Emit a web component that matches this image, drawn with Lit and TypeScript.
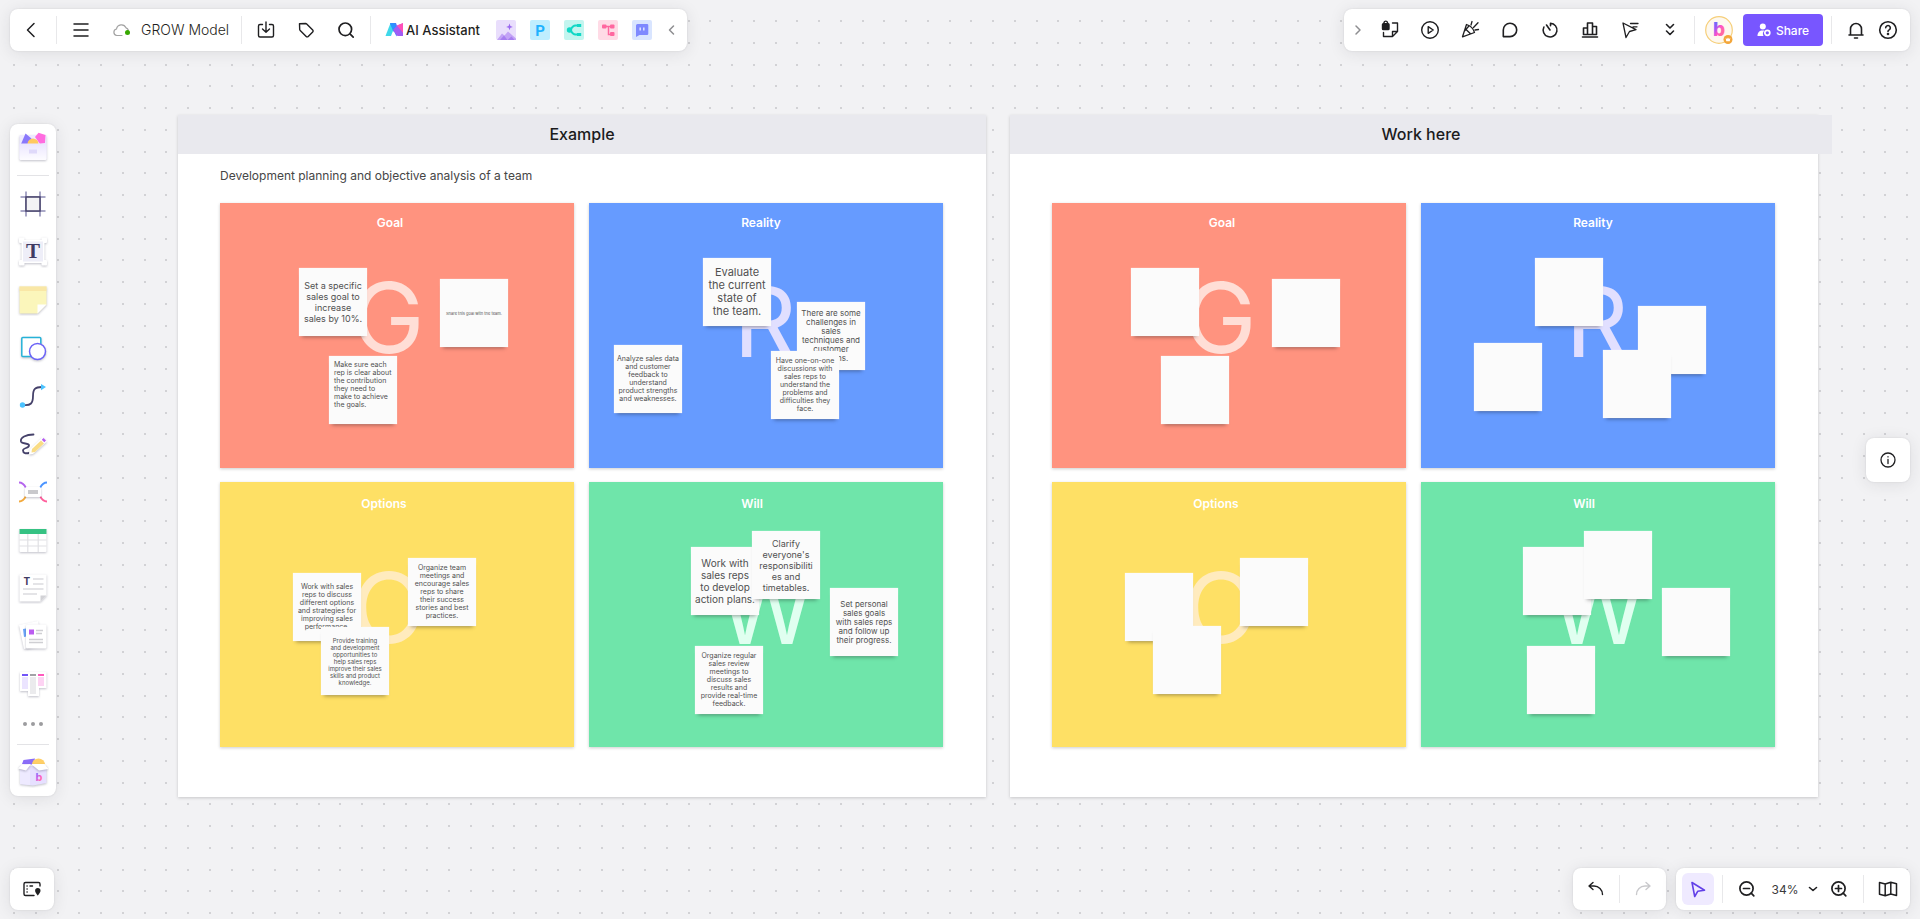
import { LitElement, html, svg, css } from "lit";
import { customElement, property, state } from "lit/decorators.js";
import { styleMap } from "lit/directives/style-map.js";

type Note = { x: number; y: number; size?: number; text?: string; left?: boolean };
type Quadrant = {
  title: string;
  letter: string;
  tone: string;
  titleX: number;
  titleY: number;
  letterX: number;
  letterY: number;
  notes: Note[];
};

const ZOOM = 0.34;
const GRID = 64 * ZOOM;

/* Line height that goes with each note text size. */
const LINE: Record<number, number> = { 4: 5, 6: 7, 7: 8, 8: 9, 9: 11, 10: 12, 11: 13 };

const exampleQuadrants: Quadrant[] = [
  {
    title: "Goal", letter: "G", tone: "goal", titleX: 170, titleY: 12, letterX: 168, letterY: 56,
    notes: [
      { x: 79, y: 65, size: 9, text: "Set a specific\nsales goal to\nincrease\nsales by 10%." },
      { x: 220, y: 76, size: 4, text: "Share this goal with the team." },
      { x: 109, y: 153, size: 7, left: true, text: "Make sure each\nrep is clear about\nthe contribution\nthey need to\nmake to achieve\nthe goals." },
    ],
  },
  {
    title: "Reality", letter: "R", tone: "reality", titleX: 172, titleY: 12, letterX: 176, letterY: 60,
    notes: [
      { x: 114, y: 55, size: 11, text: "Evaluate\nthe current\nstate of\nthe team." },
      { x: 208, y: 99, size: 8, text: "There are some\nchallenges in\nsales\ntechniques and\ncustomer\nrelations." },
      { x: 25, y: 142, size: 7, text: "Analyze sales data\nand customer\nfeedback to\nunderstand\nproduct strengths\nand weaknesses." },
      { x: 182, y: 148, size: 7, text: "Have one-on-one\ndiscussions with\nsales reps to\nunderstand the\nproblems and\ndifficulties they\nface." },
    ],
  },
  {
    title: "Options", letter: "O", tone: "options", titleX: 164, titleY: 14, letterX: 169, letterY: 67,
    notes: [
      { x: 73, y: 91, size: 7, text: "Work with sales\nreps to discuss\ndifferent options\nand strategies for\nimproving sales\nperformance." },
      { x: 188, y: 76, size: 7, text: "Organize team\nmeetings and\nencourage sales\nreps to share\ntheir success\nstories and best\npractices." },
      { x: 101, y: 145, size: 6, text: "Provide training\nand development\nopportunities to\nhelp sales reps\nimprove their sales\nskills and product\nknowledge." },
    ],
  },
  {
    title: "Will", letter: "W", tone: "will", titleX: 163, titleY: 14, letterX: 177, letterY: 68,
    notes: [
      { x: 102, y: 65, size: 10, text: "Work with\nsales reps\nto develop\naction plans." },
      { x: 163, y: 49, size: 9, text: "Clarify\neveryone's\nresponsibiliti\nes and\ntimetables." },
      { x: 241, y: 106, size: 8, text: "Set personal\nsales goals\nwith sales reps\nand follow up\ntheir progress." },
      { x: 106, y: 164, size: 7, text: "Organize regular\nsales review\nmeetings to\ndiscuss sales\nresults and\nprovide real-time\nfeedback." },
    ],
  },
];

const blankNotes: Note[][] = [
  [{ x: 79, y: 65 }, { x: 220, y: 76 }, { x: 109, y: 153 }],
  [{ x: 114, y: 55 }, { x: 217, y: 103 }, { x: 53, y: 140 }, { x: 182, y: 147 }],
  [{ x: 73, y: 91 }, { x: 188, y: 76 }, { x: 101, y: 144 }],
  [{ x: 102, y: 65 }, { x: 163, y: 49 }, { x: 241, y: 106 }, { x: 106, y: 164 }],
];
const workQuadrants = exampleQuadrants.map((q, i) => ({ ...q, notes: blankNotes[i] }));

/* ---------- icons ---------- */
const line = (body: unknown, size = 24, width = "1.5") =>
  html`<svg width=${size} height=${size} viewBox="0 0 ${size} ${size}" fill="none" stroke="currentColor"
    stroke-width=${width} stroke-linecap="round" stroke-linejoin="round" aria-hidden="true">${body}</svg>`;
const art = (body: unknown, size = 32) =>
  html`<svg width=${size} height=${size} viewBox="0 0 ${size} ${size}" fill="none" aria-hidden="true">${body}</svg>`;

const I = {
  back: line(svg`<path d="M14 5.500 7.500 12l6.500 6.500"/>`),
  menu: line(svg`<path d="M5 6h14M5 12h14M5 18h14"/>`),
  cloud: html`<svg width="17" height="16" viewBox="0 0 17 16" fill="none" aria-hidden="true">
    <path d="M9 13.500H3.800a3.300 3.300 0 0 1-.3-6.500A5 5 0 0 1 13 5.800a3.300 3.300 0 0 1 2.300 2.400" stroke="#a3a3a3" stroke-width="1.200" stroke-linecap="round"/>
    <circle cx="14.500" cy="10.500" r="2.500" fill="#37a800"/></svg>`,
  import: line(svg`<path d="M8.500 6.500H6a1.500 1.500 0 0 0-1.500 1.500v9.500A1.500 1.500 0 0 0 6 19h12a1.500 1.500 0 0 0 1.500-1.500V8A1.500 1.500 0 0 0 18 6.500h-2.500M12 4v10M8.500 11l3.500 3.300 3.500-3.300"/>`, 24, "1.4"),
  tag: line(svg`<path d="M5.500 5.700 11.700 5.500a1.500 1.500 0 0 1 1 .4l6 6a1.400 1.400 0 0 1 0 2l-4.500 4.600a1.400 1.400 0 0 1-2 0l-6-6a1.500 1.500 0 0 1-.5-1z"/>`, 24, "1.4"),
  search: line(svg`<circle cx="11.300" cy="11.300" r="6.300"/><path d="m16.200 16.200 3 3"/>`, 24, "1.7"),
  logo: html`<svg width="18" height="14" viewBox="0 0 18 14" aria-hidden="true">
    <path d="M5.500 0H11L6 13H0.500z" fill="#3fd8ea"/><path d="M5 0h6l2.500 7-2 6.500z" fill="#4a7bf7"/>
    <path d="M5 .5 8.500 9 11 4 9.500 0z" fill="#2a92ff"/>
    <path d="M12 2.500 18 .2V13h-5.500L8 7z" fill="#a05cf5"/><path d="M12 2.500 18 0v10z" fill="#ff4fb8"/></svg>`,
  image: art(svg`<rect width="20" height="20" rx="2" fill="#e9defc"/><path d="m1 20 5-6.500 2.500 2 3.500-4 8 7V20z" fill="#c3a3f6"/><path d="m4 20 4-4.500L11.500 20l4-3.500 3 3.500z" fill="#a77ef0"/><path d="M13.500 3.500 14.400 6l2.500.9-2.500.9-.9 2.500-.9-2.500L10.100 6.900l2.500-.9z" fill="#9a68f0"/>`, 20),
  ppt: art(svg`<rect width="20" height="20" rx="2" fill="#bfeeff"/><text x="10" y="15.500" text-anchor="middle" font-family="Roboto, sans-serif" font-weight="700" font-size="15" fill="#1eb2ff">P</text>`, 20),
  mind: art(svg`<rect width="20" height="20" rx="2" fill="#c3f5ef"/><circle cx="5.500" cy="10" r="2.700" fill="#12d8c6"/><path d="M16 5.500h-4.500C9 5.500 7.500 8 6.500 10c1 2 2.500 4.500 5 4.500H16" stroke="#12d8c6" stroke-width="2"/><path d="M13 4h4.200v3H13zM13 13h4.200v3H13z" fill="#12d8c6"/>`, 20),
  flow: art(svg`<rect width="20" height="20" rx="2" fill="#ffdbe6"/><path d="M6 6.500h8M10.500 6.500v8H14" stroke="#ff679f" stroke-width="1.500"/><rect x="4" y="4.500" width="4.500" height="4" rx="1" fill="#ff679f"/><rect x="12" y="4.500" width="4.500" height="4" rx="1" fill="#ff679f"/><rect x="12" y="12" width="4.500" height="4" rx="1" fill="#ff679f"/>`, 20),
  chatAi: art(svg`<rect width="20" height="20" rx="2" fill="#d9e5ff"/><path d="M5.500 4H15a1.300 1.300 0 0 1 1.300 1.300v8.400A1.300 1.300 0 0 1 15 15H7.500L4 17V5.500A1.500 1.500 0 0 1 5.500 4z" fill="#7e89ff"/><path d="M8.200 7.500v3M11.800 7.500v3" stroke="#dfe6ff" stroke-width="1.500"/>`, 20),
  left: line(svg`<path d="M9.500 4 5.500 8l4 4"/>`, 16),
  right: line(svg`<path d="M6 4l4 4-4 4"/>`, 16),
  lock: line(svg`<rect x="4.500" y="5.800" width="6.500" height="5.700" rx=".8" fill="currentColor"/><path d="M6 5.800V4.500a1.800 1.800 0 0 1 3.500 0v1.300M5.500 14.500v4h6M14.500 5H19.500v8.500l-5 5h-3M19.500 13.500h-5v5"/>`, 24, "1.4"),
  play: line(svg`<circle cx="12" cy="12" r="8.300"/><path d="M10.200 8.700v6.600l5-3.300z"/>`, 24, "1.4"),
  party: line(svg`<path d="M8.500 6.500 4.500 18.800l12-4.300A12 12 0 0 0 8.500 6.500zM7.500 11l5 4.800M10.500 8.500 6.500 13M13 7l1-3.500M15.500 9.500 20 4.800M17 12l3.500-.5"/>`, 24, "1.3"),
  bubble: line(svg`<path d="M12 5.200a6.700 6.700 0 0 1 0 13.400H5.300V12A6.700 6.700 0 0 1 12 5.200z"/>`, 24, "1.6"),
  timer: line(svg`<path d="M12.500 5.200v2.500M12.500 5.200a6.900 6.900 0 1 1-6.600 3.800M8.500 7l3.500 5"/>`, 24, "1.6"),
  chart: line(svg`<path d="M5.500 10h4v6.500h-4zM9.500 5h5v11.500h-5zM14.500 8.500h4v8h-4zM4.500 19h15"/>`, 24, "1.6"),
  laser: line(svg`<path d="m5 5 3 14.500 3.500-6 6.500-1.800zM12.500 5.500H20M15 8.800H19"/>`, 24, "1.3"),
  more: line(svg`<path d="m8.500 6.500 3.500 3.500 3.500-3.500M8.500 13l3.500 3.500 3.500-3.500"/>`, 24, "1.6"),
  bell: line(svg`<path d="M5 17h14M6.500 17v-6a5.500 5.500 0 0 1 11 0v6M10.500 20h3"/>`, 24, "1.6"),
  help: line(svg`<circle cx="12" cy="12" r="8.300"/><path d="M9.700 9.800a2.300 2.300 0 1 1 3.400 2.100c-.8.400-1.100.9-1.100 1.600"/><circle cx="12" cy="16" r=".5" fill="currentColor"/>`, 24, "1.6"),
  share: html`<svg width="14" height="14" viewBox="0 0 14 14" aria-hidden="true"><circle cx="5.800" cy="3.500" r="3" fill="#fff"/><path d="M.5 13c0-3.500 2-5.500 5-5.500h2A4.500 4.500 0 0 0 6.500 13z" fill="#fff"/><circle cx="10.300" cy="9.800" r="2.500" fill="none" stroke="#fff" stroke-width="1.700"/></svg>`,
  undo: line(svg`<path d="M9 5.500 5 9l4 3.500M5.500 9H10a8.500 8.500 0 0 1 8.500 8.500"/>`, 24, "1.4"),
  redo: line(svg`<path d="m15 5.500 4 3.500-4 3.500M18.500 9H14a8.500 8.500 0 0 0-8.500 8.500"/>`, 24, "1.4"),
  pointer: line(svg`<path d="m6 5.500 2.700 14 3-5.200 6.800-1z"/>`, 24, "1.6"),
  zoomOut: line(svg`<circle cx="11.500" cy="11.500" r="6.600"/><path d="m16.200 16.200 2.600 2.600M8.500 11.500h6"/>`, 24, "1.7"),
  zoomIn: line(svg`<circle cx="11.500" cy="11.500" r="6.600"/><path d="m16.200 16.200 2.600 2.600M8.500 11.500h6M11.500 8.500v6"/>`, 24, "1.7"),
  map: line(svg`<path d="m3.500 5.500 5.700 1.500 5.600-1.800 5.700 1.600V18.500l-5.700-1.500-5.600 1.800-5.700-1.500zM9.200 7v11.800M14.800 5.200v11.800"/>`, 24, "1.5"),
  down: line(svg`<path d="m1.500 3.500 3.500 3 3.500-3"/>`, 10, "1.6"),
  info: line(svg`<circle cx="8" cy="8" r="7"/><path d="M8 7.500v4M8 4.700v.2"/>`, 16, "1.3"),
  minimap: line(svg`<path d="M20 9V7a1.500 1.500 0 0 0-1.500-1.500h-13A1.500 1.500 0 0 0 4 7v10a1.500 1.500 0 0 0 1.500 1.500H14M7 9h.2M7 12h.2M7 15h.2M10 9h2.500"/><path d="M17.800 11a2.700 2.700 0 0 1 2.700 2.700c0 1.800-2.700 4.800-2.700 4.800s-2.700-3-2.700-4.800A2.700 2.700 0 0 1 17.800 11z" fill="currentColor" stroke="none"/>`, 24, "1.4"),
};

const tools: [string, unknown][] = [
  ["Frame", art(svg`<path d="M9 3.500v25M23 3.500v25M3.500 9h25M3.500 23h25" stroke="#8e8cb5" stroke-width="1.500"/><rect x="9" y="9" width="14" height="14" fill="#f3f3f5" stroke="#45416a" stroke-width="1.500"/>`)],
  ["Text", art(svg`<g class="lift"><rect x="4.500" y="4" width="23" height="23" fill="#fff"/><rect x="2" y="1.500" width="5.500" height="5.500" rx="1" fill="#fff"/><rect x="24.500" y="1.500" width="5.500" height="5.500" rx="1" fill="#fff"/><rect x="2" y="24" width="5.500" height="5.500" rx="1" fill="#fff"/><rect x="24.500" y="24" width="5.500" height="5.500" rx="1" fill="#fff"/></g><rect x="6" y="5.500" width="20" height="20" fill="#eeeef8"/><text x="16" y="22" text-anchor="middle" font-family="Liberation Serif, serif" font-weight="700" font-size="21" fill="#3f3b63">T</text>`)],
  ["Sticky note", art(svg`<g class="lift"><path d="M2.500 2.500h27v18L20.500 29.500h-18z" fill="#fbf6bb"/><path d="M2.500 2.500h27v4.500h-27z" fill="#f9e7a6"/><path d="M29.500 20.500h-9v9z" fill="#fff"/></g>`)],
  ["Shape", art(svg`<g class="lift"><rect x="4.800" y="5.500" width="19" height="19" rx="1" fill="#fff" stroke="#26b2d8" stroke-width="1.500"/><circle cx="20.500" cy="19.500" r="8" fill="#fff" stroke="#6c63f6" stroke-width="1.500"/></g>`)],
  ["Connection line", art(svg`<path d="M6 25c8 1 10-2 10-9s2-9 9-9" stroke="#45416a" stroke-width="1.800"/><circle cx="5.500" cy="25" r="2.700" fill="#4cc3ff"/><path d="m24 4 5 3-5 3.200z" fill="#4cc3ff"/>`)],
  ["Pen", art(svg`<path d="M16.500 6.500C9 6.500 3 9.500 4 13.500c1 3 8 1 8 4s-6 2-6 5 3 3 6 2.500" stroke="#45416a" stroke-width="1.800" stroke-linecap="round"/><g class="lift"><path d="m25.500 9 4.500 4.500-14 12.500-4 .5.500-5z" fill="#fff"/></g><path d="m24 12.500 3 3-9 8.500-3.500.5.500-3.500z" fill="#f9dc85"/><path d="m26.500 10 2.500 2.500-1.700 1.700-2.500-2.500z" fill="#b45cf0"/>`)],
  ["Mind map", art(svg`<path d="M9 12C7 8 5 6.500 2 6.500" stroke="#b465ee" stroke-width="1.800"/><path d="M9 20c-2 4-4 5.500-7 5.500" stroke="#f3a93c" stroke-width="1.800"/><path d="M23 12c2-4 4-5.500 7-5.500" stroke="#4a94ff" stroke-width="1.800"/><path d="M23 20c2 4 4 5.500 7 5.500" stroke="#ff5f9c" stroke-width="1.800"/><g class="lift"><rect x="8" y="11" width="16" height="10" rx="1.500" fill="#fff"/></g><rect x="11" y="14" width="10" height="4" fill="#c9c9cc"/>`)],
  ["Table", art(svg`<g class="lift"><rect x="2.500" y="5" width="27" height="23" rx="1" fill="#fff"/></g><path d="M2.500 5h27v5h-27z" fill="#36c283"/><path d="M10.800 10v18M21.200 10v18M2.500 16h27M2.500 22h27" stroke="#e0e0e4" stroke-width="1.200"/>`)],
  ["Document", art(svg`<g class="lift"><path d="M2.500 2.500h27v21l-6 6h-21z" fill="#fff"/></g><path d="M29.500 23.500h-6v6z" fill="#d2d2d6"/><text x="9.800" y="13" text-anchor="middle" font-family="Inter, sans-serif" font-weight="700" font-size="10" fill="#3f3b63">T</text><path d="M16 7h10.500M16 12h10.500M6 17h20.500M6 22h14" stroke="#dcdce0" stroke-width="1.500"/>`)],
  ["Cards", art(svg`<g class="lift"><path d="m2 5 19-4 5 24-19 4z" fill="#fff"/></g><path d="m6 9 6-1v8l-5 1z" fill="#6ba4f8"/><g class="lift"><rect x="9" y="4.500" width="20.500" height="24" rx="1.500" fill="#fff"/></g><rect x="12" y="9.500" width="5" height="5" fill="#bb5df0"/><path d="M19 10.500h7M19 13.500h6M12 19.500h14M12 22.500h14" stroke="#cfcfd3" stroke-width="1.500"/>`)],
  ["Kanban", art(svg`<g class="lift"><path d="M3 4h26.500v16H22v8H11v-5H3z" fill="#fff"/></g><path d="M5 6h6v2H5z" fill="#7254f8"/><path d="M13 6h6v2h-6z" fill="#a2a2a6"/><path d="M21 6h6v2h-6z" fill="#ff59bd"/><path d="M5 9h6v12H5z" fill="#ebe4ff"/><path d="M13 9h6v17h-6z" fill="#ebebed"/><path d="M21 9h6v9h-6z" fill="#fdd3f3"/>`)],
];

const templates = art(svg`<defs><linearGradient id="g1" x1="0" y1="0" x2="0" y2="1"><stop offset="0" stop-color="#ebe6ff"/><stop offset="1" stop-color="#fdfcff"/></linearGradient></defs>
  <g class="lift"><rect x="2.500" y="3" width="27" height="25" rx="1.500" fill="#eeeaff"/></g>
  <path d="M4 12 8.500 1.500l6 5L12 12z" fill="#8a78fb"/><path d="M18 5 21.500.8l7 2.200L28 11l-5 1z" fill="#ff6cdf"/><circle cx="16" cy="12" r="5.500" fill="#ffc95f"/>
  <path d="M2.500 11.500h27V26.500a1.500 1.500 0 0 1-1.500 1.500H4a1.500 1.500 0 0 1-1.500-1.500z" fill="url(#g1)"/><rect x="12" y="17.500" width="8" height="4" fill="#dfd9fa"/>`);

const resources = art(svg`<defs><linearGradient id="g2" x1="0" y1="0" x2="1" y2="1"><stop offset="0" stop-color="#2f9bff"/><stop offset=".3" stop-color="#a65cf5"/><stop offset=".6" stop-color="#ff5fc0"/><stop offset="1" stop-color="#ff8a6b"/></linearGradient></defs>
  <g class="lift"><path d="M3 10h26.500v17L16 29.500 3 28z" fill="#e6e0ff"/></g><path d="M3 11 13 14v15l-10-1z" fill="#eeeaff"/>
  <path d="M5 8 6.500 4 18 2.500 16 9z" fill="#8a6cf8"/><path d="M15 8.500a6.500 6 0 0 1 13 0z" fill="#ffcf67"/>
  <g class="lift"><path d="m5 8.500 9-.5-5 6.500-8-2z" fill="#fff"/><path d="M14 8h13.500l4 5-9.500 1.500z" fill="#fff"/></g>
  <text x="22" y="25" text-anchor="middle" font-family="Inter, sans-serif" font-weight="700" font-size="11" fill="url(#g2)">b</text>`);

@customElement("wb-note")
class WbNote extends LitElement {
  @property({ attribute: false }) note!: Note;
  static styles = css`
    :host { display: flex; box-sizing: border-box; width: 68px; height: 68px; align-items: center; justify-content: center;
      background: #fbfbfb; color: #505050; box-shadow: 0 4px 4px -3px rgba(0,0,0,.38), 0 0 1px rgba(255,255,255,.7); }
    p { margin: 0; white-space: pre; text-align: center; }
    .start { text-align: left; align-self: flex-start; flex: 1; padding: 5px; }
  `;
  render() {
    const { text, size = 8, left } = this.note;
    return text
      ? html`<p class=${left ? "start" : ""} style=${styleMap({ fontSize: size + "px", lineHeight: LINE[size] + "px" })}>${text}</p>`
      : html``;
  }
}

@customElement("wb-board")
class WbBoard extends LitElement {
  @property() heading = "";
  @property() description = "";
  @property({ type: Boolean, reflect: true }) wide = false;
  @property({ attribute: false }) quadrants: Quadrant[] = [];
  static styles = css`
    :host { display: block; flex: none; width: 808px; background: #fff; box-shadow: 0 1px 3px rgba(0,0,0,.18); }
    h2 { margin: 0; line-height: 39px; font-size: 16px; font-weight: 500; text-align: center; color: #1b1b1d; background: #e9e9ee; }
    :host([wide]) h2 { margin-right: -14px; }
    .desc { margin: 0; padding: 14px 42px 19px; min-height: 16px; font-size: 12px; line-height: 16px; color: #464646; }
    .grid { display: grid; grid-template-columns: 1fr 1fr; gap: 14px 15px; padding: 0 43px 50px 42px; }
    section { position: relative; height: 265px; box-shadow: 0 1px 3px rgba(0,0,0,.2); overflow: hidden; }
    h3, .letter, wb-note { position: absolute; margin: 0; }
    h3 { font-size: 12px; line-height: 16px; font-weight: 600; color: #fff; transform: translateX(-50%); }
    .letter { font-size: 98px; line-height: 117px; font-weight: 400; transform: translateX(-50%); }
    .goal { background: #ff937f; } .goal .letter { color: #ffded6; }
    .reality { background: #669bff; } .reality .letter { color: #e1dfff; }
    .options { background: #fee065; } .options .letter { color: #ffebbe; }
    .will { background: #6fe5aa; } .will .letter { color: #e0fff0; }
  `;
  render() {
    const at = (x: number, y: number) => styleMap({ left: x + "px", top: y + "px" });
    return html`<h2>${this.heading}</h2>
      <p class="desc">${this.description}</p>
      <div class="grid">
        ${this.quadrants.map((q) => html`<section class=${q.tone}>
          <h3 style=${at(q.titleX, q.titleY)}>${q.title}</h3>
          <span class="letter" style=${at(q.letterX, q.letterY)}>${q.letter}</span>
          ${q.notes.map((n) => html`<wb-note .note=${n} style=${at(n.x, n.y)}></wb-note>`)}
        </section>`)}
      </div>`;
  }
}

@customElement("app-root")
class AppRoot extends LitElement {
  @state() private dots = "";

  private measure = () => {
    let d = "";
    for (let y = 20 - GRID; y < window.innerHeight; y += GRID)
      for (let x = 13; x < window.innerWidth; x += GRID) d += `M${Math.round(x)} ${Math.round(y)}h2v2h-2z`;
    this.dots = d;
  };
  connectedCallback() {
    super.connectedCallback();
    this.measure();
    window.addEventListener("resize", this.measure);
  }
  disconnectedCallback() {
    window.removeEventListener("resize", this.measure);
    super.disconnectedCallback();
  }

  static styles = css`
    :host { display: block; position: relative; height: 100vh; overflow: hidden; background: #f2f2f4; font-family: Inter, "Open Sans", sans-serif; color: #1f1f21; }
    svg { display: block; }
    .dots { position: absolute; inset: 0; width: 100%; height: 100%; fill: #d2d2d5; }
    .canvas { position: absolute; inset: 0; display: flex; align-items: flex-start; gap: 24px; padding: 115px 0 0 178px; }
    .chrome { position: relative; display: flex; flex-direction: column; justify-content: space-between; box-sizing: border-box; height: 100%; padding: 9px 10px; }
    .row { display: flex; align-items: center; justify-content: space-between; }
    .bar { display: flex; align-items: center; box-sizing: border-box; background: #fff; border-radius: 8px; box-shadow: 0 2px 16px rgba(39,41,46,.1), 0 0 2px rgba(39,41,46,.12); }
    .h { height: 42px; }
    .main { gap: 8px; padding: 0 3px 0 6px; }
    button { display: flex; align-items: center; justify-content: center; padding: 0; border: 0; background: none; color: inherit; font: inherit; border-radius: 6px; cursor: pointer; }
    .ib { width: 32px; height: 32px; }
    .tool { width: 40px; height: 32px; }
    .fold { width: 24px; height: 32px; color: #8d8d90; }
    .sep { width: 1px; height: 28px; background: #e8e8ea; }
    .doc { gap: 11px; padding: 0 4px 0 8px; font-size: 14px; line-height: 20px; font-weight: 300; height: 32px; }
    .ai { gap: 3px; padding: 0 8px 0 6px; font-size: 13px; line-height: 20px; font-weight: 500; height: 32px; }
    .apps { display: flex; gap: 14px; }
    .collab { padding: 0 6px 0 2px; }
    .collab .sep { margin: 0 8px; }
    .collab .sep.first { margin: 0 10px 0 4px; }
    .share { gap: 5px; width: 80px; height: 32px; margin-left: 10px; background: #7856ff; color: #fff; font-size: 12px; font-weight: 500; border-radius: 4px; }
    .side { flex-direction: column; width: 46px; }
    .side button { width: 46px; height: 48px; }
    .side .etc { height: 32px; }
    .side .rule { width: 32px; height: 1px; background: #e3e3e6; margin: 3px 0 4px; }
    .side .rule.low { margin: 4px 0 3px; }
    .lift { filter: drop-shadow(0 1px 1px rgba(30,30,60,.28)); }
    .info { width: 44px; height: 44px; justify-content: center; }
    .group { display: flex; gap: 10px; }
    .hist button { width: 46px; height: 42px; }
    .hist button:disabled { color: #c9c9cc; }
    .view { padding: 0 6px; }
    .view .sep { margin: 0 8px; }
    .on { background: #efeaff; color: #6240e8; }
    .pct { gap: 10px; width: 60px; height: 32px; padding-left: 4px; box-sizing: border-box; font-size: 12px; color: #3a3a3c; }
    .pct svg { color: #1f1f21; }
    .mini { width: 44px; justify-content: center; }
  `;

  render() {
    const btn = (label: string, icon: unknown, cls = "ib") => html`<button class=${cls} aria-label=${label}>${icon}</button>`;
    return html`
      <svg class="dots" shape-rendering="crispEdges" aria-hidden="true"><path d=${this.dots}/></svg>
      <main class="canvas">
        <wb-board heading="Example" description="Development planning and objective analysis of a team" .quadrants=${exampleQuadrants}></wb-board>
        <wb-board heading="Work here" wide .quadrants=${workQuadrants}></wb-board>
      </main>
      <div class="chrome">
        <header class="row">
          <nav class="bar h main">
            ${btn("Back", I.back)}<span class="sep"></span>${btn("Menu", I.menu)}
            <button class="doc">${I.cloud}<span>GROW Model</span></button>
            <span class="sep"></span>
            ${btn("Export", I.import)}${btn("Tags", I.tag)}${btn("Search", I.search)}
            <span class="sep"></span>
            <button class="ai">${I.logo}<span>AI Assistant</span></button>
            <div class="apps">
              ${btn("AI image", I.image, "app")}${btn("AI presentation", I.ppt, "app")}${btn("AI mind map", I.mind, "app")}
              ${btn("AI flowchart", I.flow, "app")}${btn("AI chat", I.chatAi, "app")}
            </div>
            ${btn("Collapse", I.left, "fold")}
          </nav>
          <div class="bar h collab">
            ${btn("Collapse", I.right, "fold")}
            ${btn("Private mode", I.lock, "tool")}${btn("Present", I.play, "tool")}${btn("Celebrate", I.party, "tool")}
            ${btn("Comment", I.bubble, "tool")}${btn("Timer", I.timer, "tool")}${btn("Vote", I.chart, "tool")}
            ${btn("Cursors", I.laser, "tool")}${btn("More", I.more, "tool")}
            <span class="sep first"></span>
            ${btn("Account", html`<svg width="28" height="28" viewBox="0 0 28 28" aria-hidden="true">
              <defs><linearGradient id="b" x1="0" y1="0" x2="1" y2="1"><stop offset="0" stop-color="#2f8bff"/><stop offset=".3" stop-color="#8f5cf8"/><stop offset=".5" stop-color="#ff52c8"/><stop offset="1" stop-color="#ff8a6b"/></linearGradient></defs>
              <circle cx="14" cy="14" r="13.300" fill="#fdf8ef" stroke="#f6cf7a" stroke-width="1.200"/>
              <text x="14" y="20" text-anchor="middle" font-family="Inter, sans-serif" font-weight="800" font-size="19" fill="url(#b)">b</text>
              <circle cx="23" cy="23.500" r="4.500" fill="#f3a63a"/><path d="m20.700 22 1.300 1 1-1.500 1 1.500 1.300-1-.5 3.300h-3.600z" fill="#fff"/></svg>`, "avatar")}
            <button class="share">${I.share}<span>Share</span></button>
            <span class="sep"></span>
            ${btn("Notifications", I.bell)}${btn("Help", I.help)}
          </div>
        </header>
        <div class="row">
          <nav class="bar side">
            ${btn("Templates", templates)}
            <span class="rule"></span>
            ${tools.map(([label, icon]) => btn(label, icon))}
            ${btn("More tools", html`<svg width="20" height="4" viewBox="0 0 20 4" fill="#9c9c9f" aria-hidden="true"><circle cx="2" cy="2" r="2"/><circle cx="10" cy="2" r="2"/><circle cx="18" cy="2" r="2"/></svg>`, "etc")}
            <span class="rule low"></span>
            ${btn("Resources", resources)}
          </nav>
          <button class="bar info" aria-label="Information">${I.info}</button>
        </div>
        <footer class="row">
          <button class="bar h mini" aria-label="Minimap">${I.minimap}</button>
          <div class="group">
            <div class="bar h hist">
              ${btn("Undo", I.undo)}<span class="sep"></span><button disabled aria-label="Redo">${I.redo}</button>
            </div>
            <div class="bar h view">
              ${btn("Select", I.pointer, "ib on")}<span class="sep"></span>
              ${btn("Zoom out", I.zoomOut)}
              <button class="pct">${Math.round(ZOOM * 100)}%${I.down}</button>
              ${btn("Zoom in", I.zoomIn)}<span class="sep"></span>${btn("Map", I.map)}
            </div>
          </div>
        </footer>
      </div>`;
  }
}
